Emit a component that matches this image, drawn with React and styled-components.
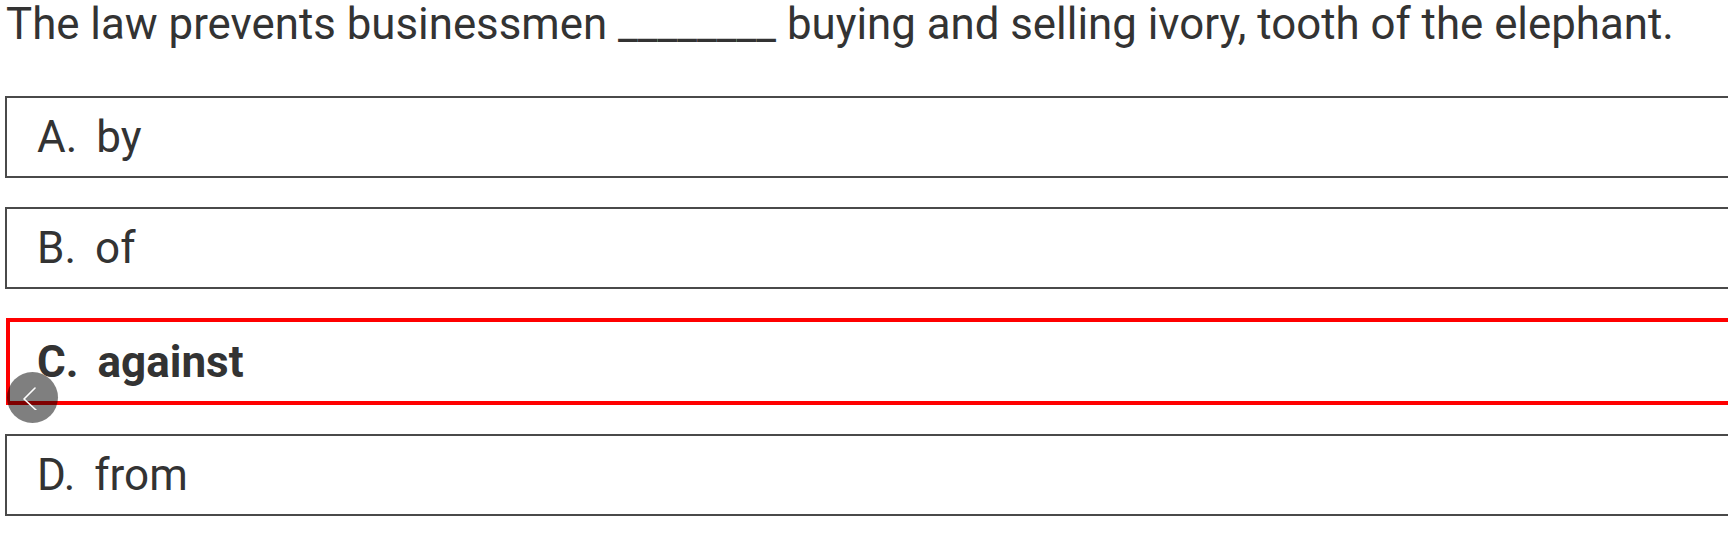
import React from 'react'
import styled, { createGlobalStyle } from 'styled-components'

const GlobalStyle = createGlobalStyle`
    html, body {
        margin: 0;
        padding: 0;
        background: #ffffff;
        overflow: hidden;
    }
    body {
        font-family: Roboto, "Liberation Sans", Arial, sans-serif;
        color: #333333;
    }
`

const Page = styled.div`
    width: 1800px;
    padding: 0 0 0 5px;
`

const Question = styled.div`
    font-size: 43.8px;
    line-height: 48px;
    padding: 0 0 0 1px;
    margin-bottom: 48px;
    white-space: nowrap;
`

const Options = styled.div`
    display: flex;
    flex-direction: column;
    gap: 29px;
`

const Option = styled.div`
    position: relative;
    box-sizing: border-box;
    height: ${p => (p.$picked ? '87px' : '82px')};
    border: ${p => (p.$picked ? '4px solid #ff0000' : '2px solid #4a4a4a')};
    margin-left: ${p => (p.$picked ? '1px' : '0')};
    display: flex;
    align-items: center;
    padding-left: ${p => (p.$picked ? '27px' : '30px')};
`

const Label = styled.span`
    font-size: 44px;
    font-weight: ${p => (p.$picked ? 700 : 400)};
    white-space: nowrap;
`

const Letter = styled.span`
    display: inline-block;
    margin-right: 19px;
`

const BackButton = styled.div`
    position: absolute;
    left: -3px;
    top: 50px;
    width: 51px;
    height: 51px;
    border-radius: 50%;
    background: rgba(0, 0, 0, 0.5);
    display: flex;
    align-items: center;
    justify-content: center;
`

const options = [
    { key: 'A', text: 'by' },
    { key: 'B', text: 'of' },
    { key: 'C', text: 'against', picked: true },
    { key: 'D', text: 'from' },
]

const App = () => {
    return (
        <Page>
            <GlobalStyle />
            <Question>
                The law prevents businessmen ________ buying and selling ivory, tooth of the elephant.
            </Question>
            <Options>
                {options.map(o => (
                    <Option key={o.key} $picked={o.picked}>
                        <Label $picked={o.picked}>
                            <Letter>{o.key}.</Letter>
                            {o.text}
                        </Label>
                        {o.picked && (
                            <BackButton>
                                <svg width="24" height="24" viewBox="0 0 24 24">
                                    <path d="M14 2 L3 13 L15 24" fill="none" stroke="#fff" strokeWidth="1.6" strokeLinecap="round" strokeLinejoin="round" />
                                </svg>
                            </BackButton>
                        )}
                    </Option>
                ))}
            </Options>
        </Page>
    )
}

export default App
